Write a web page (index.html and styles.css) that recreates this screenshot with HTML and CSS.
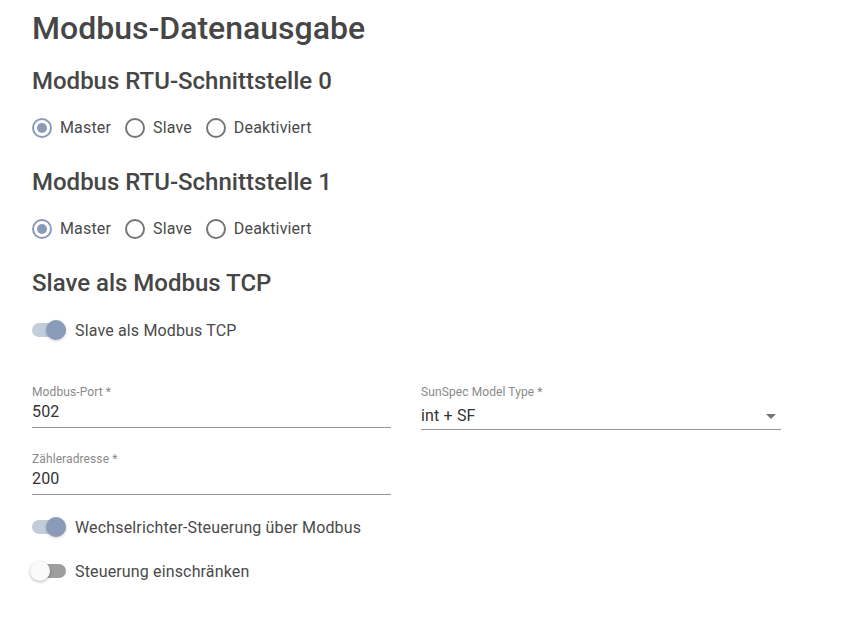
FILE: index.html
```html
<!DOCTYPE html>
<html lang="de">
<head>
<meta charset="utf-8">
<title>Modbus-Datenausgabe</title>
<link rel="stylesheet" href="styles.css">
</head>
<body>
<main class="page">
  <h1 class="title">Modbus-Datenausgabe</h1>

  <h2 class="section first">Modbus RTU-Schnittstelle 0</h2>
  <div class="radio-group">
    <label class="radio"><span class="radio-circle checked"></span><span class="radio-label">Master</span></label>
    <label class="radio"><span class="radio-circle"></span><span class="radio-label">Slave</span></label>
    <label class="radio"><span class="radio-circle"></span><span class="radio-label">Deaktiviert</span></label>
  </div>

  <h2 class="section">Modbus RTU-Schnittstelle 1</h2>
  <div class="radio-group">
    <label class="radio"><span class="radio-circle checked"></span><span class="radio-label">Master</span></label>
    <label class="radio"><span class="radio-circle"></span><span class="radio-label">Slave</span></label>
    <label class="radio"><span class="radio-circle"></span><span class="radio-label">Deaktiviert</span></label>
  </div>

  <h2 class="section">Slave als Modbus TCP</h2>
  <div class="switch on"><span class="track"><span class="thumb"></span></span><span class="switch-label">Slave als Modbus TCP</span></div>

  <div class="fields">
    <div class="field">
      <div class="field-label">Modbus-Port *</div>
      <div class="field-value">502</div>
    </div>
    <div class="field select">
      <div class="field-label">SunSpec Model Type *</div>
      <div class="field-value"><span>int + SF</span><span class="arrow"></span></div>
    </div>
    <div class="field">
      <div class="field-label">Zähleradresse *</div>
      <div class="field-value">200</div>
    </div>
  </div>

  <div class="switch on s-inv"><span class="track"><span class="thumb"></span></span><span class="switch-label">Wechselrichter-Steuerung über Modbus</span></div>
  <div class="switch off s-restrict"><span class="track"><span class="thumb"></span></span><span class="switch-label">Steuerung einschränken</span></div>
</main>
</body>
</html>
```
FILE: styles.css
```css
* { box-sizing: border-box; }
html, body { margin: 0; padding: 0; background: #fff; }
body {
  font-family: Roboto, "Liberation Sans", sans-serif;
  color: #454545;
  width: 841px;
  height: 621px;
  overflow: hidden;
}
.page { padding: 8px 32px 0 32px; }

.title {
  margin: 0;
  font-size: 32px;
  line-height: 40px;
  font-weight: 500;
  color: #464646;
}
.section {
  margin: 26px 0 0 0;
  font-size: 24px;
  line-height: 32px;
  font-weight: 500;
  color: #464646;
}
.section.first { margin-top: 17px; }

.radio-group {
  display: flex;
  align-items: center;
  margin-top: 19px;
  height: 24px;
}
.radio {
  display: flex;
  align-items: center;
  margin-right: 14px;
  font-size: 16px;
  line-height: 24px;
  letter-spacing: 0.15px;
}
.radio-circle {
  width: 20px;
  height: 20px;
  border: 2px solid #767676;
  border-radius: 50%;
  margin-right: 8px;
  display: flex;
  align-items: center;
  justify-content: center;
}
.radio-circle.checked { border-color: #8a9bb9; }
.radio-circle.checked::after {
  content: "";
  width: 10px;
  height: 10px;
  border-radius: 50%;
  background: #8a9bb9;
}
.radio-label { color: #4a4a4a; }

.switch {
  display: flex;
  align-items: center;
  height: 24px;
  margin-top: 19px;
  font-size: 16px;
  letter-spacing: 0.15px;
}
.track {
  position: relative;
  width: 34px;
  height: 14px;
  border-radius: 7px;
  margin-right: 9px;
  display: flex;
  align-items: center;
}
.thumb {
  position: absolute;
  top: -3px;
  width: 20px;
  height: 20px;
  border-radius: 50%;
}
.switch.on .track { background: #c3ccdb; }
.switch.on .thumb { background: #8a9bb9; left: 14px; box-shadow: 0 1px 3px rgba(0,0,0,.2); }
.switch.off .track { background: #9e9e9e; }
.switch.off .thumb { background: #fafafa; left: -2px; box-shadow: 0 1px 3px rgba(0,0,0,.3); }
.switch-label { color: #4a4a4a; }

.fields {
  display: grid;
  grid-template-columns: 359px 360px;
  column-gap: 30px;
  row-gap: 21px;
  align-items: start;
  margin-top: 42px;
}
.field { border-bottom: 1px solid #939393; padding-bottom: 3px; }
.field-label {
  font-size: 12px;
  line-height: 16px;
  color: #8a8a8a;
  letter-spacing: 0.1px;
}
.field-value {
  font-size: 16px;
  line-height: 24px;
  color: #333;
  letter-spacing: 0.15px;
}
.field.select { padding-bottom: 1px; }
.field.select .field-value {
  display: flex;
  align-items: center;
  justify-content: space-between;
  margin-top: 4px;
}
.arrow {
  width: 0;
  height: 0;
  border-left: 5px solid transparent;
  border-right: 5px solid transparent;
  border-top: 5px solid #757575;
  margin-right: 5px;
}
.s-inv { margin-top: 20px; }
.s-restrict { margin-top: 20px; }
```
